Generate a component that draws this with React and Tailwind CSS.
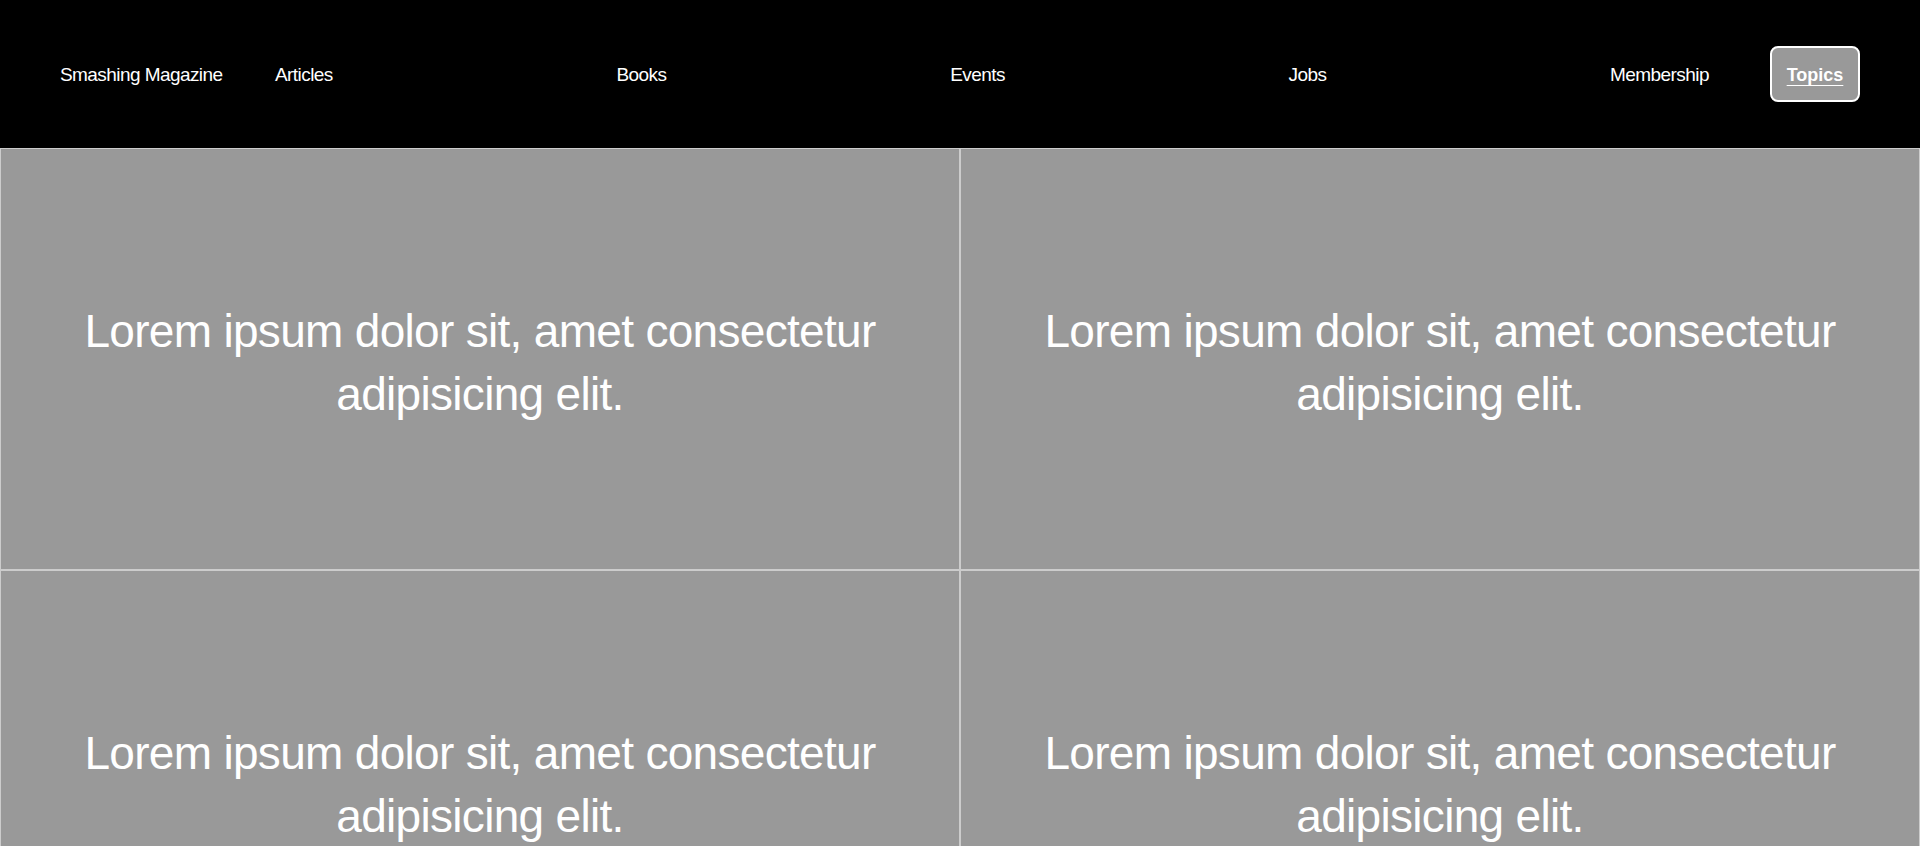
import React from 'react';

const links = ['Articles', 'Books', 'Events', 'Jobs', 'Membership'];

const Cell = () => (
  <div className="h-[422px] border border-[#cccccc] bg-[#999999] flex items-center justify-center px-[60px] pt-[8px]">
    <h2 className="text-white text-center text-[46px] leading-[63px] tracking-[-0.015em] max-w-[840px]">
      Lorem ipsum dolor sit, amet consectetur adipisicing elit.
    </h2>
  </div>
);

export default function App() {
  return (
    <div className="min-h-screen bg-white font-['Liberation_Sans',Arial,sans-serif]">
      {/* Header */}
      <header className="h-[148px] bg-black flex items-center px-[60px] text-white text-[19px] tracking-[-0.03em]">
        <a className="w-[215px] shrink-0 whitespace-nowrap pt-[2px]">Smashing Magazine</a>
        <nav className="flex-1 flex items-center justify-between pt-[2px]">
          {links.map((l) => (
            <a key={l}>{l}</a>
          ))}
        </nav>
        <button className="ml-[61px] w-[90px] h-[56px] pt-[3px] flex items-center justify-center rounded-[8px] border-2 border-white bg-[#999999] text-white font-bold underline underline-offset-[4px] text-[18px] tracking-normal">
          Topics
        </button>
      </header>

      {/* Grid */}
      <main className="grid grid-cols-2">
        <Cell />
        <Cell />
        <Cell />
        <Cell />
      </main>
    </div>
  );
}
